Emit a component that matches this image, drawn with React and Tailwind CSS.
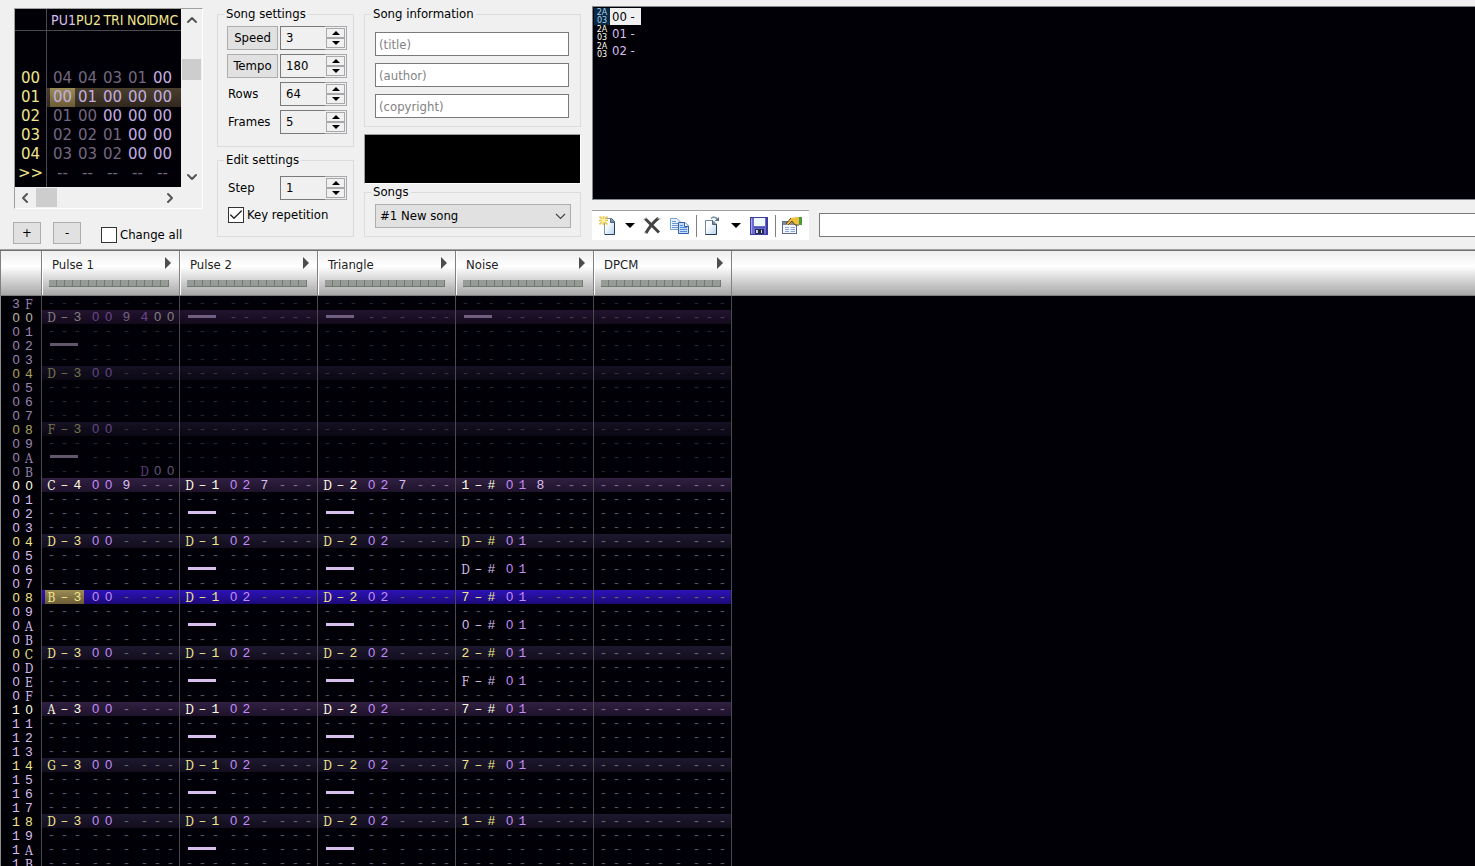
import React, { useState } from 'react';
import clsx from 'clsx';
import { ChevronDown, ChevronLeft, ChevronRight, ChevronUp, Check } from 'lucide-react';

const ORDER = [
  ['00', '04', '04', '03', '01', '00'],
  ['01', '00', '01', '00', '00', '00'],
  ['02', '01', '00', '00', '00', '00'],
  ['03', '02', '02', '01', '00', '00'],
  ['04', '03', '03', '02', '00', '00'],
  ['>>', '--', '--', '--', '--', '--'],
];

// frame entries using the same pattern as the current frame
const sameAsCurrent = (row, col) => row[0] !== '>>' && row[col] === ORDER[1][col];

const CHANNELS = ['Pulse 1', 'Pulse 2', 'Triangle', 'Noise', 'DPCM'];

const CUT = { cut: true };
const n = (note, inst, vol = '-', fx = '---') => ({ note, inst, vol, fx });

// rows of the previous frame, shown dimmed above the current one
const PREVIOUS = [
  { no: '3F', cells: [] },
  { no: '00', cells: [n('D–3', '00', '9', '400'), CUT, CUT, CUT] },
  { no: '01', cells: [] },
  { no: '02', cells: [CUT] },
  { no: '03', cells: [] },
  { no: '04', cells: [n('D–3', '00')] },
  { no: '05', cells: [] },
  { no: '06', cells: [] },
  { no: '07', cells: [] },
  { no: '08', cells: [n('F–3', '00')] },
  { no: '09', cells: [] },
  { no: '0A', cells: [CUT] },
  { no: '0B', cells: [n('---', '--', '-', 'D00')] },
];

const D1 = n('D–1', '02');
const D2 = n('D–2', '02');

const CURRENT_CELLS = {
  0: [n('C–4', '00', '9'), n('D–1', '02', '7'), n('D–2', '02', '7'), n('1–#', '01', '8')],
  2: [null, CUT, CUT],
  4: [n('D–3', '00'), D1, D2, n('D–#', '01')],
  6: [null, CUT, CUT, n('D–#', '01')],
  8: [n('B–3', '00'), D1, D2, n('7–#', '01')],
  10: [null, CUT, CUT, n('0–#', '01')],
  12: [n('D–3', '00'), D1, D2, n('2–#', '01')],
  14: [null, CUT, CUT, n('F–#', '01')],
  16: [n('A–3', '00'), D1, D2, n('7–#', '01')],
  18: [null, CUT, CUT],
  20: [n('G–3', '00'), D1, D2, n('7–#', '01')],
  22: [null, CUT, CUT],
  24: [n('D–3', '00'), D1, D2, n('1–#', '01')],
  26: [null, CUT, CUT],
};

const CURRENT = Array.from({ length: 28 }, (_, i) => ({
  no: i.toString(16).toUpperCase().padStart(2, '0'),
  cells: CURRENT_CELLS[i] || [],
}));

const CURSOR_ROW = 8;

const rowKind = (no) => {
  const value = parseInt(no, 16);
  if (value % 16 === 0) return 'bar';
  if (value % 4 === 0) return 'beat';
  return 'plain';
};

const TEXT_COLOR = {
  bar: 'text-[#ffffe0]',
  beat: 'text-[#f0e68c]',
  plain: 'text-[#d8bfed]',
};

const DASH_COLOR = {
  bar: 'text-[#857090]',
  beat: 'text-[#6c6868]',
  plain: 'text-[#5b5566]',
};

const ROW_COLOR = {
  bar: 'bg-linear-to-b from-[#312042] to-[#1e122b]',
  beat: 'bg-linear-to-b from-[#1d182e] to-[#120e1e]',
  plain: '',
};

const DIMMED_ROW_COLOR = {
  bar: 'bg-linear-to-b from-[#22142f] to-[#130a1c]',
  beat: 'bg-linear-to-b from-[#151122] to-[#0b0814]',
  plain: '',
};

const glyphFont = (ch) => {
  if (ch === '0') return 'font-["Liberation_Sans_Narrow","Liberation_Sans",sans-serif] leading-[14px]';
  if (/[A-G]/.test(ch)) return 'font-["DejaVu_Serif_Condensed","DejaVu_Serif",serif] text-[12px] leading-4';
  return 'font-["Liberation_Mono",monospace] leading-4';
};

const Glyphs = ({ text, color, dash }) => (
  <span className="flex">
    {text.split('').map((ch, i) => (
      <span key={i} className={clsx('flex h-[14px] w-[13px] justify-center', ch === '-' ? dash : color, glyphFont(ch))}>
        {ch}
      </span>
    ))}
  </span>
);

const PatternCell = ({ cell, kind, selected, dimmed }) => {
  const { note, inst, vol, fx, cut } = { note: '---', inst: '--', vol: '-', fx: '---', ...cell };
  const dash = DASH_COLOR[kind];

  return (
    <div className="h-[14px] w-[138px] shrink-0 border-r border-[#4b4b4f] pl-[3px]">
      <div className={clsx('flex gap-[5px]', dimmed && 'opacity-45')}>
        {cut ? (
          <span className="w-[39px] pt-[5px] pl-[5px]">
            <span className="block h-[3px] w-7 bg-[#d8bfed]" />
          </span>
        ) : (
          <span className={clsx(selected && 'bg-linear-to-b from-[#9c8c56] to-[#6b5c36]')}>
            <Glyphs text={note} color={TEXT_COLOR[kind]} dash={dash} />
          </span>
        )}
        <Glyphs text={inst} color="text-[#c48cfa]" dash={dash} />
        <Glyphs text={vol} color="text-[#d8bfed]" dash={dash} />
        <span className="flex">
          <Glyphs text={fx[0]} color="text-[#c48cfa]" dash={dash} />
          <Glyphs text={fx.slice(1)} color={TEXT_COLOR[kind]} dash={dash} />
        </span>
      </div>
    </div>
  );
};

const PatternRow = ({ row, dimmed, active }) => {
  const kind = rowKind(row.no);
  const background = dimmed ? DIMMED_ROW_COLOR[kind] : ROW_COLOR[kind];

  return (
    <div className="flex h-[14px] text-[13px]">
      <div className="flex w-[42px] shrink-0 justify-center border-x border-r-[#4b4b4f] border-l-[#8a8a8a] pt-px pl-[3px]">
        <span className={clsx(dimmed && 'opacity-70')}>
          <Glyphs text={row.no} color={TEXT_COLOR[kind]} />
        </span>
      </div>
      <div className={clsx('flex', active ? 'bg-linear-to-b from-[#2d12b8] to-[#1c0a78]' : background)}>
        {CHANNELS.map((name, i) => (
          <PatternCell key={name} cell={row.cells[i]} kind={kind} selected={active && i === 0} dimmed={dimmed} />
        ))}
      </div>
    </div>
  );
};

const ChannelHeader = ({ name }) => (
  <div className="w-[138px] shrink-0 border-r border-l border-r-[#808080] border-l-white">
    <div className="flex items-center justify-between pt-1 pr-2 pl-[9px]">
      <span className="text-[13px] leading-5 text-[#222]">{name}</span>
      <button aria-label={`${name} effects`} className="mb-1">
        <svg width="6" height="12" viewBox="0 0 6 12">
          <path d="M0 0 L6 6 L0 12 Z" fill="#4d4d4d" />
        </svg>
      </button>
    </div>
    <div className="mt-[5px] ml-[6px] flex">
      {Array.from({ length: 15 }, (_, i) => (
        <span key={i} className="h-[7px] w-2 border-r border-b border-[#737873] bg-[#979b97]" />
      ))}
    </div>
  </div>
);

const Arrow = ({ up }) => (
  <svg width="8" height="4" viewBox="0 0 8 4">
    <path d={up ? 'M4 0 L8 4 H0 Z' : 'M0 0 H8 L4 4 Z'} fill="#000" />
  </svg>
);

const Spinner = ({ id, value, onChange }) => {
  const step = (delta) => onChange(String(Number(value) + delta));

  return (
    <div className="flex h-6 w-[67px]">
      <input
        id={id}
        aria-label={id}
        value={value}
        onChange={(e) => onChange(e.target.value)}
        className="w-[45px] border border-r-0 border-[#7a7a7a] pl-[5px] outline-none"
      />
      <div className="flex w-[22px] flex-col border border-l-0 border-[#a9a9ad] p-px">
        <button aria-label="Increase" onClick={() => step(1)} className="flex flex-1 items-center justify-center border border-[#a9a9ad]">
          <Arrow up />
        </button>
        <button aria-label="Decrease" onClick={() => step(-1)} className="flex flex-1 items-center justify-center border border-[#a9a9ad]">
          <Arrow />
        </button>
      </div>
    </div>
  );
};

const Group = ({ title, className, children }) => (
  <fieldset className={clsx('border border-[#dcdcdc]', className)}>
    <legend className="ml-[6px] px-0.5 leading-4">{title}</legend>
    {children}
  </fieldset>
);

const Checkbox = ({ id, label, checked, onChange }) => (
  <div className="flex items-center gap-[3px]">
    <span className="relative flex h-4 w-4">
      <input
        id={id}
        type="checkbox"
        checked={checked}
        onChange={(e) => onChange(e.target.checked)}
        className="h-4 w-4 appearance-none border border-[#333] bg-white"
      />
      {checked && <Check className="pointer-events-none absolute inset-0 h-4 w-4 text-[#222]" strokeWidth={2} />}
    </span>
    <label htmlFor={id} className="leading-4">{label}</label>
  </div>
);

const FrameEditor = () => (
  <div className="ml-px h-[201px] w-[189px] border border-t-[#a0a0a0] border-r-white border-b-white border-l-[#a0a0a0]">
    <div className="flex">
      <div className="h-[178px] w-[166px] bg-[#020007] font-['DejaVu_Sans',sans-serif] text-[15px]">
        <div className="flex h-[22px] border-b border-[#4b4b4f] font-['DejaVu_Sans_Condensed','DejaVu_Sans',sans-serif] text-[14px] text-[#f0e68c]">
          <div className="w-8 border-r border-[#4b4b4f]" />
          <div className="flex pl-1 leading-[23px]">
            {['PU1', 'PU2', 'TRI', 'NOI', 'DMC'].map((name, i) => (
              <span key={name} className={clsx('flex w-[25px] justify-center', i === 0 && 'text-[#d8bfed]')}>
                {name}
              </span>
            ))}
          </div>
        </div>
        <div className="h-[38px] w-8 border-r border-[#4b4b4f]" />
        {ORDER.map((row, r) => (
          <div key={row[0]} className="flex h-[19px] leading-[19px]">
            <div className="flex w-8 shrink-0 justify-center border-r border-[#4b4b4f] text-[#f0e68c]">{row[0]}</div>
            <div className={clsx('flex flex-1 pl-[3px]', r === 1 && 'bg-linear-to-b from-[#4b402e] to-[#30271e]')}>
              {row.slice(1).map((value, c) => (
                <span
                  key={c}
                  className={clsx(
                    'flex w-[25px] justify-center',
                    sameAsCurrent(row, c + 1) ? 'text-[#c3aee0]' : 'text-[#746880]',
                    r === 1 && c === 0 && 'bg-linear-to-b from-[#9c8c56] to-[#6b5c36]'
                  )}
                >
                  {value}
                </span>
              ))}
            </div>
          </div>
        ))}
        <div className="h-1 w-8 border-r border-[#4b4b4f]" />
      </div>
      <div className="flex w-5 flex-col items-center pl-px text-[#555]">
        <ChevronUp className="mt-[3px] h-4 w-4" strokeWidth={3} />
        <span className="mt-[31px] h-[21px] w-[19px] bg-[#cdcdcd]" />
        <ChevronDown className="mt-auto mb-0.5 h-4 w-4" strokeWidth={3} />
      </div>
    </div>
    <div className="mt-px flex h-[19px] items-center justify-between pr-6 pl-0.5 text-[#555]">
      <div className="flex items-center gap-[3px]">
        <ChevronLeft className="h-4 w-4" strokeWidth={3} />
        <span className="h-[19px] w-[21px] bg-[#cdcdcd]" />
      </div>
      <ChevronRight className="h-4 w-4" strokeWidth={3} />
    </div>
  </div>
);

const NewIcon = () => (
  <svg width="18" height="20" viewBox="0 0 18 20">
    <defs>
      <linearGradient id="sheet" x1="0" y1="0" x2="1" y2="1">
        <stop offset="0.3" stopColor="#ffffff" />
        <stop offset="1" stopColor="#b4d2ec" />
      </linearGradient>
    </defs>
    <path d="M5.5 2.5 H12.5 L15.5 6 V18.5 H5.5 Z" fill="url(#sheet)" stroke="#7d94ad" />
    <path d="M12.5 2.5 L15.5 6 V18.5 H6" fill="none" stroke="#273f5e" />
    <path d="M11.5 2.5 V6.5 H15.5" fill="#6f8cab" stroke="#4a6482" />
    <path d="M4.5 0 V9 M0 4.5 H9 M0.5 0.5 L8.5 8.5 M8.5 0.5 L0.5 8.5" stroke="#e8c24a" strokeWidth="1.6" />
    <rect x="2.5" y="2.5" width="4" height="4" fill="#fff3a0" />
  </svg>
);

const DeleteIcon = () => (
  <svg width="18" height="18" viewBox="0 0 18 18">
    <path d="M2 1.500 L16 15.500" stroke="#444" strokeWidth="3" />
    <path d="M15.500 1 Q8 7 3 16" stroke="#444" strokeWidth="3" fill="none" />
    <path d="M0.500 2.500 L4 1 M14 1 L17.500 2 M1 15 L4 17" stroke="#aaa" />
  </svg>
);

const CopyIcon = () => (
  <svg width="20" height="18" viewBox="0 0 20 18">
    <path d="M0.500 1.500 H7 L10.500 5 V12.500 H0.500 Z" fill="#e6f1ff" stroke="#7aa0cc" />
    <path d="M2 4.500 H6 M2 6.500 H8 M2 8.500 H8 M2 10.500 H8" stroke="#6c96d2" />
    <path d="M8.500 5.500 H15 L18.500 9 V16.500 H8.500 Z" fill="#c4dcfa" stroke="#3560b0" />
    <path d="M14.500 5.500 V9.500 H18.500" fill="#fff" stroke="#2f5ca8" />
    <path d="M10 8.500 H13 M10 10.500 H17 M10 12.500 H17 M10 14.500 H17" stroke="#5a8ad6" />
  </svg>
);

const LoadIcon = () => (
  <svg width="16" height="20" viewBox="0 0 16 20">
    <path d="M1.5 4.5 H9 L12.5 8 V18.5 H1.5 Z" fill="url(#sheet)" stroke="#6f87a0" />
    <path d="M12.5 8 V18.5 H1.5" fill="none" stroke="#243c58" />
    <path d="M8.5 4.5 V8.5 H12.5" fill="#6f8cab" stroke="#4a6482" />
    <path d="M7 2.5 Q10 -0.5 13.5 3" fill="none" stroke="#8193a5" strokeWidth="1.5" />
    <path d="M10.5 5 H15 V1 Z" fill="#5a7085" />
  </svg>
);

const SaveIcon = () => (
  <svg width="18" height="18" viewBox="0 0 18 18">
    <rect x="0.500" y="0.500" width="17" height="17" fill="#6c6cd2" stroke="#3c3ca0" />
    <path d="M1.500 16.500 V1.500" stroke="#a6a6f2" />
    <path d="M16.500 1 V17" stroke="#3a3a9a" />
    <rect x="4" y="1" width="11" height="8" fill="#eef8ff" />
    <path d="M4 10.500 H15" stroke="#4a4ab8" />
    <rect x="5" y="12" width="9" height="5" fill="#242a58" />
    <rect x="6" y="13" width="6" height="3" fill="#cfd8e8" />
    <rect x="8" y="13" width="3" height="3" fill="#242a38" />
  </svg>
);

const EditIcon = () => (
  <svg width="21" height="19" viewBox="0 0 21 19">
    <rect x="0.500" y="5.500" width="14" height="12" fill="#f3f7ff" stroke="#5b6b90" />
    <rect x="1" y="6" width="13" height="3" fill="#7d88a8" />
    <path d="M3 11.500 H7 M8.500 11.500 H13 M3 13.500 H7 M8.500 13.500 H13 M3 15.500 H7 M8.500 15.500 H13" stroke="#8fa6dd" />
    <path d="M4 8 L9 2 L15 1 H18 V8 L13 9 L10 6 L7 9 Z" fill="#f0bf3a" />
    <path d="M4 8 L9 2 M6 9 L10 5 L13 9 H17" fill="none" stroke="#5c4414" />
    <rect x="17" y="1" width="3" height="8" fill="#4d9a3c" />
  </svg>
);

const MenuArrow = () => (
  <svg width="10" height="5" viewBox="0 0 10 5">
    <path d="M0 0 H10 L5 5 Z" fill="#000" />
  </svg>
);

const Toolbar = () => (
  <div className="flex h-[30px] w-[217px] shrink-0 items-center border-t border-[#a0a0a0] bg-white pl-[7px]">
    <button aria-label="Add instrument" className="flex w-[26px]"><NewIcon /></button>
    <button aria-label="Add menu" className="flex w-[18px]"><MenuArrow /></button>
    <button aria-label="Remove instrument" className="flex w-[27px]"><DeleteIcon /></button>
    <button aria-label="Clone instrument" className="flex w-[26px]"><CopyIcon /></button>
    <span className="mr-[7px] h-[22px] w-px bg-[#808080]" />
    <button aria-label="Load instrument" className="flex w-[27px]"><LoadIcon /></button>
    <button aria-label="Load menu" className="flex w-[19px]"><MenuArrow /></button>
    <button aria-label="Save instrument" className="flex w-[25px]"><SaveIcon /></button>
    <span className="mr-[6px] h-[22px] w-px bg-[#808080]" />
    <button aria-label="Edit instrument" className="flex"><EditIcon /></button>
  </div>
);

const App = () => {
  const [settings, setSettings] = useState({ Speed: '3', Tempo: '180', Rows: '64', Frames: '5' });
  const [step, setStep] = useState('1');
  const [keyRepetition, setKeyRepetition] = useState(true);
  const [changeAll, setChangeAll] = useState(false);
  const [instrument, setInstrument] = useState(0);

  return (
    <div className="flex h-screen flex-col overflow-hidden bg-[#f0f0f0] font-['DejaVu_Sans_Condensed','DejaVu_Sans',sans-serif] text-[13px] text-black">
      <div className="flex h-[250px] shrink-0 border-b border-[#a0a0a0]">
        <div className="w-[204px] shrink-0 pt-2 pl-[13px]">
          <FrameEditor />
          <div className="mt-[13px] flex">
            <button className="h-[22px] w-7 border border-[#adadad] bg-[#e1e1e1] leading-4">+</button>
            <button className="ml-3 h-[22px] w-7 border border-[#adadad] bg-[#e1e1e1] leading-4">-</button>
            <div className="mt-[5px] ml-5 whitespace-nowrap">
              <Checkbox id="change-all" label="Change all" checked={changeAll} onChange={setChangeAll} />
            </div>
          </div>
        </div>

        <div className="ml-[13px] w-[137px] shrink-0 pt-[6px]">
          <Group title="Song settings" className="h-[141px]">
            <div className="flex flex-col gap-1 pt-1 pl-[9px]">
              {Object.entries(settings).map(([name, value]) => (
                <div key={name} className="flex items-center">
                  <div className="w-[53px]">
                    {name === 'Speed' || name === 'Tempo' ? (
                      <button className="h-6 w-[51px] border border-[#adadad] bg-[#e1e1e1]">{name}</button>
                    ) : (
                      <label htmlFor={name} className="pl-px">{name}</label>
                    )}
                  </div>
                  <Spinner id={name} value={value} onChange={(v) => setSettings({ ...settings, [name]: v })} />
                </div>
              ))}
            </div>
          </Group>
          <Group title="Edit settings" className="mt-[5px] h-[85px]">
            <div className="flex items-center pt-2 pl-[10px]">
              <label htmlFor="Step" className="w-[52px]">Step</label>
              <Spinner id="Step" value={step} onChange={setStep} />
            </div>
            <div className="mt-[7px] ml-[10px]">
              <Checkbox id="key-repetition" label="Key repetition" checked={keyRepetition} onChange={setKeyRepetition} />
            </div>
          </Group>
        </div>

        <div className="ml-[10px] w-[217px] shrink-0 pt-[6px]">
          <Group title="Song information" className="h-[121px]">
            <div className="flex flex-col gap-[7px] pt-[10px] pr-[11px] pl-[10px]">
              {['title', 'author', 'copyright'].map((field) => (
                <input
                  key={field}
                  aria-label={field}
                  placeholder={`(${field})`}
                  className="h-6 w-full border border-[#7a7a7a] bg-white px-[3px] outline-none placeholder:text-[#838383]"
                />
              ))}
            </div>
          </Group>
          <div className="mt-[7px] h-[50px] border border-t-[#a0a0a0] border-r-white border-b-white border-l-[#a0a0a0] bg-black" />
          <Group title="Songs" className="h-[53px]">
            <div className="relative mt-1 ml-[10px] w-[196px]">
              <select aria-label="Songs" className="h-6 w-full appearance-none border border-[#adadad] bg-[#e1e1e1] pl-1">
                <option>#1 New song</option>
              </select>
              <svg className="pointer-events-none absolute top-[9px] right-[5px]" width="11" height="7" viewBox="0 0 11 7">
                <path d="M1 1 L5.500 5.500 L10 1" fill="none" stroke="#444" strokeWidth="1.200" />
              </svg>
            </div>
          </Group>
        </div>

        <div className="ml-[11px] flex min-w-0 flex-1 flex-col pt-[6px]">
          <div className="h-[194px] border border-r-0 border-[#828790] bg-[#020007] pt-px pl-px">
            {['00 -', '01 -', '02 -'].map((name, i) => (
              <button key={name} onClick={() => setInstrument(i)} className="flex h-[17px] items-center">
                <span
                  className={clsx(
                    'flex h-[17px] w-4 flex-col items-center justify-center font-["DejaVu_Sans",sans-serif] text-[8px] leading-2',
                    instrument === i ? 'bg-[#0c2a44] text-[#a8d4f0]' : 'text-[#fffff0]'
                  )}
                >
                  <span>2A</span>
                  <span>03</span>
                </span>
                <span
                  className={clsx(
                    'h-[17px] w-[31px] pl-0.5 text-left leading-[18px] whitespace-nowrap',
                    instrument === i ? 'bg-[#f0f0f0] text-black' : 'text-[#d8bfed]'
                  )}
                >
                  {name}
                </span>
              </button>
            ))}
          </div>
          <div className="mt-[10px] flex items-center">
            <Toolbar />
            <input aria-label="Instrument name" className="ml-[10px] h-6 min-w-0 flex-1 border border-r-0 border-[#7a7a7a] bg-white px-1 outline-none" />
          </div>
        </div>
      </div>

      <div className="flex h-[46px] shrink-0 border-t border-b border-t-[#707070] border-b-[#808080] bg-linear-to-b from-[#eeeeee] via-white via-35% to-[#a8a8a8]">
        <div className="w-[42px] shrink-0 border-x border-[#808080]" />
        {CHANNELS.map((name) => (
          <ChannelHeader key={name} name={name} />
        ))}
      </div>

      <div className="min-h-0 flex-1 overflow-hidden bg-[#020007]">
        {PREVIOUS.map((row) => (
          <PatternRow key={row.no} row={row} dimmed />
        ))}
        {CURRENT.map((row, i) => (
          <PatternRow key={row.no} row={row} active={i === CURSOR_ROW} />
        ))}
      </div>
    </div>
  );
};

export default App;
